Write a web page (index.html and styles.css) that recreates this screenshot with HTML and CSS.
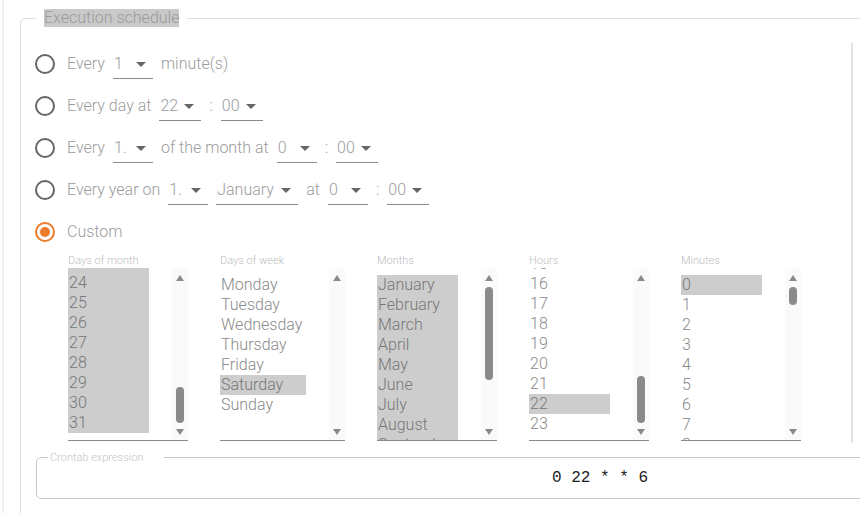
FILE: index.html
```html
<!DOCTYPE html>
<html>
<head>
<meta charset="utf-8">
<link rel="stylesheet" href="styles.css">
</head>
<body>
<div class="page">
  <fieldset class="schedule">
    <legend class="schedule-legend"><span class="hl">Execution schedule</span></legend>
    <div class="content">
      <div class="row">
        <span class="radio"></span>
        <span class="txt">Every</span>
        <span class="sel w40"><span>1</span><i class="caret"></i></span>
        <span class="txt">minute(s)</span>
      </div>
      <div class="row">
        <span class="radio"></span>
        <span class="txt">Every day at</span>
        <span class="sel w42"><span>22</span><i class="caret"></i></span>
        <span class="txt">:</span>
        <span class="sel w42"><span>00</span><i class="caret"></i></span>
      </div>
      <div class="row">
        <span class="radio"></span>
        <span class="txt">Every</span>
        <span class="sel w40"><span>1.</span><i class="caret"></i></span>
        <span class="txt">of the month at</span>
        <span class="sel w40"><span>0</span><i class="caret"></i></span>
        <span class="txt">:</span>
        <span class="sel w42"><span>00</span><i class="caret"></i></span>
      </div>
      <div class="row">
        <span class="radio"></span>
        <span class="txt">Every year on</span>
        <span class="sel w40"><span>1.</span><i class="caret"></i></span>
        <span class="sel w82"><span>January</span><i class="caret"></i></span>
        <span class="txt">at</span>
        <span class="sel w40"><span>0</span><i class="caret"></i></span>
        <span class="txt">:</span>
        <span class="sel w42"><span>00</span><i class="caret"></i></span>
      </div>
      <div class="row">
        <span class="radio on"></span>
        <span class="txt">Custom</span>
      </div>

      <div class="lists">
        <div class="col">
          <div class="lbl">Days of month</div>
          <div class="listbox">
            <div class="opts">
              <div class="inner" style="margin-top:-462px">
                <div class="opt sel-opt">1</div><div class="opt sel-opt">2</div><div class="opt sel-opt">3</div><div class="opt sel-opt">4</div><div class="opt sel-opt">5</div><div class="opt sel-opt">6</div><div class="opt sel-opt">7</div><div class="opt sel-opt">8</div><div class="opt sel-opt">9</div><div class="opt sel-opt">10</div><div class="opt sel-opt">11</div><div class="opt sel-opt">12</div><div class="opt sel-opt">13</div><div class="opt sel-opt">14</div><div class="opt sel-opt">15</div><div class="opt sel-opt">16</div><div class="opt sel-opt">17</div><div class="opt sel-opt">18</div><div class="opt sel-opt">19</div><div class="opt sel-opt">20</div><div class="opt sel-opt">21</div><div class="opt sel-opt">22</div><div class="opt sel-opt">23</div><div class="opt sel-opt">24</div><div class="opt sel-opt">25</div><div class="opt sel-opt">26</div><div class="opt sel-opt">27</div><div class="opt sel-opt">28</div><div class="opt sel-opt">29</div><div class="opt sel-opt">30</div><div class="opt sel-opt">31</div>
              </div>
            </div>
            <div class="sb">
              <i class="arr up"></i>
              <div class="track"><div class="thumb" style="margin-top:101px;height:36px"></div></div>
              <i class="arr down"></i>
            </div>
          </div>
        </div>

        <div class="col wide">
          <div class="lbl">Days of week</div>
          <div class="listbox">
            <div class="opts">
              <div class="inner">
                <div class="opt">Monday</div><div class="opt">Tuesday</div><div class="opt">Wednesday</div><div class="opt">Thursday</div><div class="opt">Friday</div><div class="opt sel-opt">Saturday</div><div class="opt">Sunday</div>
              </div>
            </div>
            <div class="sb">
              <i class="arr up"></i>
              <div class="track"></div>
              <i class="arr down"></i>
            </div>
          </div>
        </div>

        <div class="col">
          <div class="lbl">Months</div>
          <div class="listbox">
            <div class="opts">
              <div class="inner">
                <div class="opt sel-opt">January</div><div class="opt sel-opt">February</div><div class="opt sel-opt">March</div><div class="opt sel-opt">April</div><div class="opt sel-opt">May</div><div class="opt sel-opt">June</div><div class="opt sel-opt">July</div><div class="opt sel-opt">August</div><div class="opt sel-opt">September</div><div class="opt sel-opt">October</div><div class="opt sel-opt">November</div><div class="opt sel-opt">December</div>
              </div>
            </div>
            <div class="sb">
              <i class="arr up"></i>
              <div class="track"><div class="thumb" style="margin-top:1px;height:93px"></div></div>
              <i class="arr down"></i>
            </div>
          </div>
        </div>

        <div class="col">
          <div class="lbl">Hours</div>
          <div class="listbox">
            <div class="opts">
              <div class="inner" style="margin-top:-321px">
                <div class="opt">0</div><div class="opt">1</div><div class="opt">2</div><div class="opt">3</div><div class="opt">4</div><div class="opt">5</div><div class="opt">6</div><div class="opt">7</div><div class="opt">8</div><div class="opt">9</div><div class="opt">10</div><div class="opt">11</div><div class="opt">12</div><div class="opt">13</div><div class="opt">14</div><div class="opt">15</div><div class="opt">16</div><div class="opt">17</div><div class="opt">18</div><div class="opt">19</div><div class="opt">20</div><div class="opt">21</div><div class="opt sel-opt">22</div><div class="opt">23</div>
              </div>
            </div>
            <div class="sb">
              <i class="arr up"></i>
              <div class="track"><div class="thumb" style="margin-top:90px;height:47px"></div></div>
              <i class="arr down"></i>
            </div>
          </div>
        </div>

        <div class="col">
          <div class="lbl">Minutes</div>
          <div class="listbox">
            <div class="opts">
              <div class="inner">
                <div class="opt sel-opt">0</div><div class="opt">1</div><div class="opt">2</div><div class="opt">3</div><div class="opt">4</div><div class="opt">5</div><div class="opt">6</div><div class="opt">7</div><div class="opt">8</div><div class="opt">9</div><div class="opt">10</div>
              </div>
            </div>
            <div class="sb">
              <i class="arr up"></i>
              <div class="track"><div class="thumb" style="margin-top:1px;height:18px"></div></div>
              <i class="arr down"></i>
            </div>
          </div>
        </div>
      </div>
    </div>

    <fieldset class="cron">
      <legend class="cron-legend">Crontab expression</legend>
      <div class="cron-value">0 22 * * 6</div>
    </fieldset>
  </fieldset>
</div>
</body>
</html>
```

FILE: styles.css
```css
html, body {
  margin: 0;
  padding: 0;
  overflow: hidden;
  background: #fff;
}
body {
  font-family: Roboto, "Noto Sans", sans-serif;
  font-weight: 300;
  color: #999;
}
.page {
  margin-left: 2px;
  border-left: 2px solid #efefef;
  padding: 9px 0 0 16px;
  width: 1300px;
  height: 600px;
}
.schedule {
  margin: 0;
  padding: 16px 0 80px 14px;
  border: 1px solid #dedede;
  border-radius: 5px;
  min-width: 0;
  width: 1200px;
}
.schedule-legend {
  padding: 0 8px;
  margin-left: 1px;
  font-size: 16px;
  line-height: 18px;
  color: #9a9a9a;
}
.hl {
  background: #c9c9c9;
  display: inline-block;
}
.content {
  width: 816px;
  border-right: 2px solid #e2e2e2;
  padding-bottom: 2px;
}
.row {
  display: flex;
  align-items: center;
  gap: 8px;
  height: 42px;
  font-size: 16px;
}
.txt {
  color: #9c9c9c;
  line-height: 20px;
}
.radio {
  box-sizing: border-box;
  width: 20px;
  height: 20px;
  border: 2px solid #666;
  border-radius: 50%;
  margin-right: 4px;
  display: flex;
  align-items: center;
  justify-content: center;
}
.radio.on {
  border-color: #ec7b2a;
}
.radio.on::after {
  content: "";
  width: 10px;
  height: 10px;
  border-radius: 50%;
  background: #ec7b2a;
}
.sel {
  box-sizing: border-box;
  display: inline-flex;
  align-items: center;
  justify-content: space-between;
  padding: 5px 7px 4px 1px;
  line-height: 20px;
  border-bottom: 1px solid #8a8a8a;
  color: #9c9c9c;
}
.w40 { width: 40px; }
.w42 { width: 42px; }
.w82 { width: 82px; }
.caret {
  width: 0;
  height: 0;
  border-left: 5px solid transparent;
  border-right: 5px solid transparent;
  border-top: 5px solid #666;
  margin-top: 1px;
}
.lists {
  display: flex;
  gap: 32px;
  margin-left: 33px;
}
.col {
  width: 120px;
}
.col.wide {
  width: 125px;
}
.lbl {
  font-size: 11px;
  line-height: 13px;
  color: #bdbdbd;
  margin-top: 1px;
  margin-bottom: 1px;
}
.listbox {
  display: flex;
  height: 172px;
  border-bottom: 1px solid #8a8a8a;
}
.opts {
  flex: 1;
  overflow: hidden;
  margin-right: 23px;
}
.inner {
  padding-top: 7px;
}
.opt {
  height: 20px;
  line-height: 20px;
  font-size: 16px;
  padding-left: 1px;
  color: #8a8a8a;
  white-space: nowrap;
}
.opt.sel-opt {
  background: #cdcdcd;
  color: #777;
}
.sb {
  width: 16px;
  background: #fafafa;
  display: flex;
  flex-direction: column;
  align-items: center;
}
.arr {
  width: 0;
  height: 0;
  border-left: 4px solid transparent;
  border-right: 4px solid transparent;
}
.arr.up {
  border-bottom: 6px solid #8a8a8a;
  margin: 7px 0 5px;
}
.arr.down {
  border-top: 6px solid #8a8a8a;
  margin: 5px 0 5px;
}
.track {
  flex: 1;
  width: 8px;
}
.thumb {
  width: 8px;
  border-radius: 4px;
  background: #8a8a8a;
}
.cron {
  margin: 8px 0 0 1px;
  padding: 4px 11px 10px;
  border: 1px solid #c8c8c8;
  border-radius: 5px;
  width: 1128px;
  box-sizing: border-box;
  min-width: 0;
}
.cron-legend {
  font-size: 11px;
  line-height: 13px;
  color: #c4c4c4;
  padding: 0 21px 0 2px;
}
.cron-value {
  font-family: "Liberation Mono", "DejaVu Sans Mono", monospace;
  font-weight: 400;
  font-size: 16px;
  line-height: 20px;
  color: #222;
  text-align: center;
}
```
